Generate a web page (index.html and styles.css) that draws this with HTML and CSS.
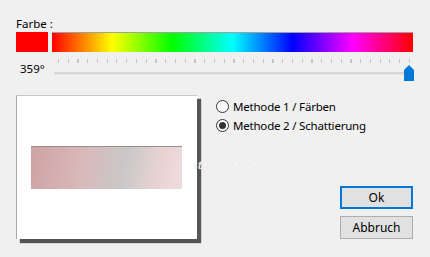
FILE: index.html
```html
<!DOCTYPE html>
<html lang="de">
<head>
    <meta charset="UTF-8">
    <title>Farbe</title>
    <link rel="stylesheet" href="styles.css">
</head>
<body>
    <div class="dialog">
        <div class="label">Farbe :</div>

        <!-- Farbwahl -->
        <div class="color-row">
            <div class="swatch"></div>
            <div class="hue-bar"></div>
        </div>

        <!-- Schieberegler -->
        <div class="slider-row">
            <span class="value">359°</span>
            <div class="slider">
                <div class="ticks"></div>
                <div class="track"></div>
                <svg class="thumb" width="10" height="16" viewBox="0 0 10 16">
                    <path d="M0 5 L5 0 L10 5 L10 16 L0 16 Z" fill="#0078d7"/>
                </svg>
            </div>
        </div>

        <div class="lower">
            <!-- Vorschau -->
            <div class="preview">
                <div class="sample"></div>
            </div>
            <span class="watermark">sternchen06</span>

            <div class="side">
                <div class="options">
                    <label class="option">
                        <span class="radio"></span>
                        Methode 1 / Färben
                    </label>
                    <label class="option">
                        <span class="radio checked"></span>
                        Methode 2 / Schattierung
                    </label>
                </div>
                <div class="buttons">
                    <button class="btn default">Ok</button>
                    <button class="btn">Abbruch</button>
                </div>
            </div>
        </div>
    </div>
</body>
</html>
```

FILE: styles.css
```css
html {
    background: #f0f0f0;
}

body {
    margin: 0;
    background: #f0f0f0;
    font-family: "Segoe UI", "Noto Sans", sans-serif;
    font-size: 11.5px;
    color: #000;
}

.dialog {
    width: 397px;
    padding: 16px 17px 18px 16px;
}

.label {
    height: 16px;
    line-height: 16px;
}

.color-row {
    display: flex;
    gap: 4px;
    height: 20px;
}

.swatch {
    width: 32px;
    background: #ff0000;
}

.hue-bar {
    flex: 1;
    border-top: 1px solid #a0a0a0;
    background: linear-gradient(to right, #ff0000, #ffff00 16.67%, #00ff00 33.33%, #00ffff 50%, #0000ff 66.67%, #ff00ff 83.33%, #ff0000);
}

.slider-row {
    display: flex;
    margin-top: 7px;
}

.value {
    width: 38px;
    padding-left: 4px;
    margin-top: 2px;
    line-height: 16px;
    box-sizing: border-box;
}

.slider {
    position: relative;
    width: 359px;
    height: 22px;
}

.ticks {
    margin-left: 4px;
    width: 352px;
    height: 4px;
    background: repeating-linear-gradient(to right, #c4c4c4 0, #c4c4c4 1px, transparent 1px, transparent 9.75px);
}

.track {
    margin-top: 9px;
    width: 357px;
    height: 2px;
    background: #d6d6d6;
    border-bottom: 1px solid #e7e7e7;
}

.thumb {
    position: absolute;
    left: 350px;
    top: 6px;
}

.lower {
    position: relative;
    display: flex;
    align-items: flex-start;
    margin-top: 14px;
}

.preview {
    flex: none;
    width: 180px;
    height: 143px;
    background: #fff;
    border-left: 1px solid #a8a8a8;
    border-top: 1px solid #c8c8c8;
    box-shadow: 4px 4px 1px #555;
    display: flex;
    align-items: center;
}

.sample {
    margin-left: 14px;
    width: 151px;
    height: 42px;
    border-top: 1px solid #9c8c8c;
    background: linear-gradient(100deg, #cfa2a3, #d9b9ba 35%, #c9c8c8 62%, #e7d2d2 82%, #efdcdc);
}

.watermark {
    position: absolute;
    left: 177px;
    top: 63px;
    font-style: italic;
    font-size: 10px;
    letter-spacing: 1px;
    color: #fbfbfb;
    white-space: nowrap;
    text-shadow: 0 0 1px #d8d8d8;
}

.side {
    flex: 1;
    height: 144px;
    margin-left: 19px;
    display: flex;
    flex-direction: column;
    justify-content: space-between;
}

.options {
    margin-top: 2px;
    letter-spacing: -0.2px;
}

.option {
    display: flex;
    align-items: center;
    height: 18px;
    gap: 4px;
    margin-bottom: 1px;
}

.radio {
    width: 11px;
    height: 11px;
    border: 1px solid #333;
    border-radius: 50%;
    background: #fff;
    position: relative;
}

.radio.checked::after {
    content: "";
    position: absolute;
    left: 2px;
    top: 2px;
    width: 7px;
    height: 7px;
    border-radius: 50%;
    background: #333;
}

.buttons {
    display: flex;
    flex-direction: column;
    align-items: flex-end;
    gap: 7px;
}

.btn {
    width: 73px;
    height: 23px;
    padding: 0;
    font-family: inherit;
    font-size: 12px;
    background: #e1e1e1;
    border: 1px solid #adadad;
}

.btn.default {
    border: 2px solid #0078d7;
}
```
